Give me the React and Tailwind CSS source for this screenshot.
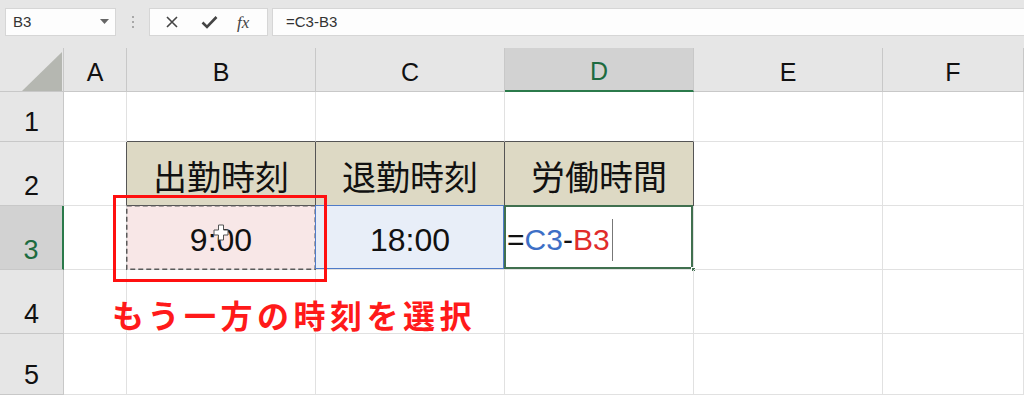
import React from "react";

const JP = { fontFamily: '"Noto Sans CJK JP", "Noto Sans", sans-serif' };
const LS = { fontFamily: '"Liberation Sans", Arial, sans-serif' };

function Corner() {
  return (
    <div className="relative bg-[#e6e6e6] border-r border-b border-[#c8c8c8]">
      <svg className="absolute left-0 top-0" width="64" height="44" viewBox="0 0 64 44">
        <polygon points="22,43 62,43 62,4" fill="#b5b7b1" />
      </svg>
    </div>
  );
}

function ColHead({ label, active }) {
  return (
    <div
      style={LS}
      className={
        "flex items-center justify-center pt-[6px] text-[25px] border-r border-b " +
        (active
          ? "bg-[#d2d2d2] text-[#1d6b40] border-r-[#c8c8c8] border-b-2 border-b-[#2b7a4b]"
          : "bg-[#e6e6e6] text-[#111] border-[#c8c8c8]")
      }
    >
      {label}
    </div>
  );
}

function RowHead({ label, active }) {
  return (
    <div
      style={LS}
      className={
        "flex items-end justify-center pb-[6px] leading-[26px] text-[27px] border-b " +
        (active
          ? "bg-[#d2d2d2] text-[#1d6b40] border-b-[#c8c8c8] border-r-2 border-r-[#2b7a4b]"
          : "bg-[#e6e6e6] text-[#111] border-r border-[#c8c8c8]")
      }
    >
      {label}
    </div>
  );
}

function Cell({ className = "", children }) {
  return (
    <div className={"relative border-r border-b border-[#e1e1e1] " + className}>{children}</div>
  );
}

export default function App() {
  return (
    <div className="relative w-[1024px] h-[395px] overflow-hidden bg-white">
      {/* Toolbar / formula bar */}
      <div className="h-[48px] bg-[#e6e6e6] flex items-start pt-[8px] pl-[5px]">
        <div
          style={LS}
          className="w-[111px] h-[28px] bg-[#fdfdfd] border border-[#d6d6d6] flex items-center justify-between pl-[7px] pr-[6px] text-[15px] text-[#333]"
        >
          <span>B3</span>
          <svg width="9" height="6" viewBox="0 0 9 6">
            <polygon points="0,0 9,0 4.5,5" fill="#666" />
          </svg>
        </div>
        <div className="w-[33px] h-[28px] flex flex-col items-center justify-center gap-[3px]">
          <span className="w-[2px] h-[2px] bg-[#a8a8a8]" />
          <span className="w-[2px] h-[2px] bg-[#a8a8a8]" />
          <span className="w-[2px] h-[2px] bg-[#a8a8a8]" />
        </div>
        <div className="w-[119px] h-[28px] bg-[#fdfdfd] border border-[#d6d6d6] flex items-center pl-[14px]">
          <svg width="14" height="14" viewBox="0 0 14 14" className="ml-[1px]">
            <path d="M2 2 L12 12 M12 2 L2 12" stroke="#444" strokeWidth="1.6" fill="none" />
          </svg>
          <svg width="17" height="14" viewBox="0 0 17 14" className="ml-[22px]">
            <path d="M1.5 7.5 L6 12 L15.5 2" stroke="#444" strokeWidth="2.6" fill="none" />
          </svg>
          <span
            style={{ fontFamily: '"Liberation Serif", "Times New Roman", serif' }}
            className="ml-[19px] italic text-[17px] text-[#444] leading-none"
          >
            fx
          </span>
        </div>
        <div
          style={LS}
          className="ml-[4px] flex-1 h-[28px] bg-[#fdfdfd] border border-r-0 border-[#d6d6d6] flex items-center pl-[13px] text-[15px] text-[#333]"
        >
          =C3-B3
        </div>
      </div>

      {/* Sheet grid */}
      <div className="grid grid-cols-[64px_63px_189px_189px_189px_189px_1fr] grid-rows-[44px_50px_64px_64px_64px_1fr] h-[347px]">
        <Corner />
        <ColHead label="A" />
        <ColHead label="B" />
        <ColHead label="C" />
        <ColHead label="D" active />
        <ColHead label="E" />
        <ColHead label="F" />

        {/* Row 1 */}
        <RowHead label="1" />
        <Cell />
        <Cell className="border-b-[#555]" />
        <Cell className="border-b-[#555]" />
        <Cell className="border-b-[#555]" />
        <Cell />
        <Cell />

        {/* Row 2 */}
        <RowHead label="2" />
        <Cell className="border-r-[#555]" />
        {["出勤時刻", "退勤時刻", "労働時間"].map((t) => (
          <div
            key={t}
            style={JP}
            className="relative bg-[#ddd9c4] border-r border-b border-[#555] flex items-center justify-center pt-[4px] text-[34px] text-[#111] leading-none"
          >
            {t}
          </div>
        ))}
        <Cell />
        <Cell />

        {/* Row 3 */}
        <RowHead label="3" active />
        <Cell />
        <Cell className="bg-[#f8e7e7] flex items-center justify-center pt-[4px]">
          <span style={LS} className="text-[32px] text-[#111] leading-none">9:00</span>
          <svg
            className="absolute -left-px -top-px"
            width="190"
            height="65"
            viewBox="0 0 190 65"
          >
            <rect
              x="0.75"
              y="0.75"
              width="188.5"
              height="63.5"
              fill="none"
              stroke="#5a5a5a"
              strokeWidth="1.5"
              strokeDasharray="5 3"
            />
          </svg>
          <svg className="absolute left-[86px] top-[18px]" width="16" height="17" viewBox="0 0 16 17">
            <path
              d="M5.5 1 H10.5 V6 H15 V11 H10.5 V16 H5.5 V11 H1 V6 H5.5 Z"
              fill="#fff"
              stroke="#555"
              strokeWidth="1"
            />
          </svg>
        </Cell>
        <Cell className="bg-[#e8eef8] flex items-center justify-center pt-[4px]">
          <span style={LS} className="text-[32px] text-[#111] leading-none">18:00</span>
          <div className="absolute -left-px -top-px right-0 bottom-0 border border-[#4f7bc8]" />
        </Cell>
        <Cell className="flex items-center pl-[2px] pt-[4px]">
          <span style={LS} className="text-[30px] leading-none text-[#111]">
            =<span className="text-[#3d6fc6]">C3</span>-<span className="text-[#e02b2b]">B3</span>
          </span>
          <span className="ml-[2px] w-[1px] h-[42px] bg-[#777]" />
          <div className="absolute -left-px -top-px right-0 bottom-0 border-2 border-[#40704f]" />
          <div className="absolute right-[-3px] bottom-[-3px] w-[5px] h-[5px] bg-[#40704f] border border-white" />
        </Cell>
        <Cell />
        <Cell />

        {/* Row 4 */}
        <RowHead label="4" />
        <Cell />
        <Cell />
        <Cell />
        <Cell />
        <Cell />
        <Cell />

        {/* Row 5 */}
        <RowHead label="5" />
        <Cell />
        <Cell />
        <Cell />
        <Cell />
        <Cell />
        <Cell />
      </div>

      {/* Annotation overlays */}
      <div className="absolute left-[113px] top-[195px] w-[214px] h-[87px] border-[3px] border-[#ff1010]" />
      <div
        style={JP}
        className="absolute left-[112px] top-[298px] text-[32px] font-bold leading-none tracking-[4.5px] text-[#ff1a1a] whitespace-nowrap"
      >
        もう一方の時刻を選択
      </div>
    </div>
  );
}
